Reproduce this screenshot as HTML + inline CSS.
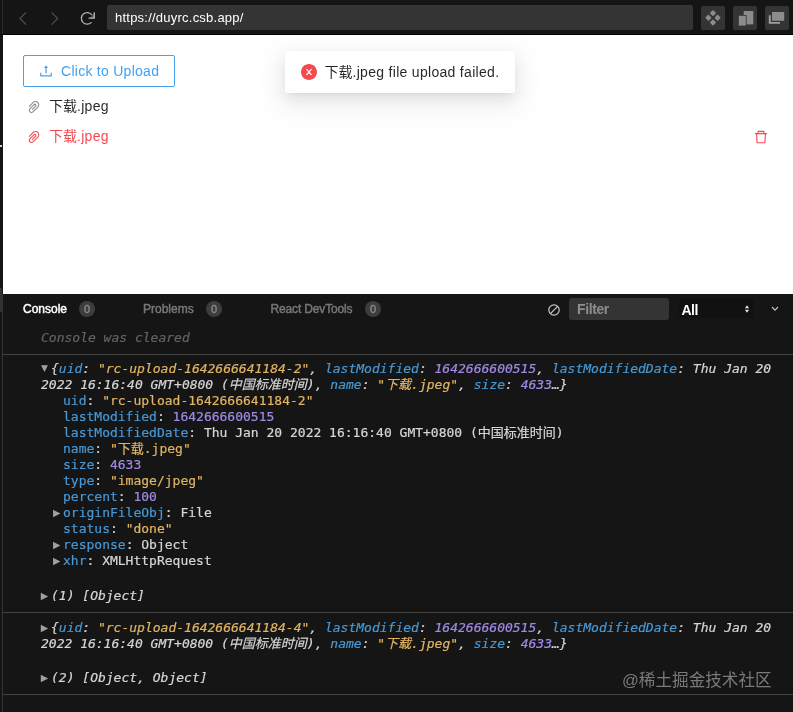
<!DOCTYPE html>
<html lang="en">
<head>
<meta charset="utf-8">
<title>Upload</title>
<style>
*{box-sizing:border-box;margin:0;padding:0}
html,body{width:793px;height:712px;overflow:hidden;background:#151515;}
body{position:relative;font-family:"Liberation Sans","Noto Sans CJK SC",sans-serif;}
.abs{position:absolute}
#topbar{left:0;top:0;width:793px;height:35px;background:#151515;}
#url{left:107px;top:5px;width:586px;height:25px;letter-spacing:.23px;background:#343434;border-radius:2px;color:#fff;font-size:13px;line-height:26px;padding-left:8px;}
.tb{top:6px;width:24px;height:24px;background:#343434;border-radius:2px}
#view{left:3px;top:35px;width:790px;height:259px;background:#fff;}
#btn{left:23px;top:55px;width:152px;height:32px;border:1px solid #42a1f0;border-radius:2px;color:#42a1f0;font-size:14px;line-height:30px;background:#fff}
#btn span{position:absolute;left:37px;top:0;white-space:nowrap;letter-spacing:.27px}
.item{left:49px;font-size:14px;line-height:22px;white-space:nowrap}
.ls{letter-spacing:.3px}
#toast{left:285px;top:51px;width:230px;height:42px;background:#fff;border-radius:2px;box-shadow:0 3px 6px -4px rgba(0,0,0,.12),0 6px 16px 0 rgba(0,0,0,.08),0 9px 28px 8px rgba(0,0,0,.05);font-size:14px;color:rgba(0,0,0,.85);line-height:42px;white-space:nowrap}
#toast span{position:absolute;left:39.5px;top:0}
#toast span span{position:static;letter-spacing:.3px}
#dev{left:3px;top:294px;width:790px;height:418px;background:#151515}
.tab{top:302px;font-size:12px;font-weight:normal;-webkit-text-stroke:.45px currentColor;line-height:14px;white-space:nowrap;font-family:"Liberation Sans",sans-serif;transform-origin:0 50%;}
.badge{top:301px;width:16px;height:16px;border-radius:8px;background:#3d3d3d;color:#8e8e8e;font-size:11px;-webkit-text-stroke:.3px currentColor;text-align:center;line-height:16px}
.hr{left:3px;width:790px;height:1px;background:#434343}
.mono{font-family:"DejaVu Sans Mono","Liberation Mono","Noto Sans CJK SC",monospace;font-size:13px;line-height:16px;white-space:pre;color:#d6d6d6;-webkit-text-stroke:.2px currentColor;}
.i{font-style:italic}
.k{color:#4799d6}.s{color:#e2b563}.n{color:#a08ae4}.g{color:#cfcfcf}
.tri{color:#a0a0a0;font-size:9.6px;font-family:"DejaVu Sans",sans-serif;line-height:16px}
</style>
</head>
<body>
<div id="root" style="position:absolute;left:0;top:0;width:793px;height:712px;will-change:transform">
<div id="topbar" class="abs"></div>
<svg class="abs" style="left:0;top:0" width="110" height="35" viewBox="0 0 110 35" fill="none" stroke-linecap="round" stroke-linejoin="round">
<path d="M25.8 12.6 L20 18.5 L25.8 24.4" stroke="#505050" stroke-width="1.15"/>
<path d="M51.8 12.6 L57.6 18.5 L51.8 24.4" stroke="#505050" stroke-width="1.15"/>
<path d="M91.6 14.6 A5.8 5.8 0 1 0 91.2 22.6" stroke="#b4b4b4" stroke-width="1.25"/>
<path d="M94.3 12.3 V18.1 H88.6" stroke="#b4b4b4" stroke-width="1.3" stroke-linecap="butt" stroke-linejoin="miter"/><path d="M94.3 13 V18.1 H90 Z" fill="#b4b4b4" opacity=".45"/>
</svg>
<div id="url" class="abs">https://duyrc.csb.app/</div>
<div class="abs tb" style="left:701px"></div>
<div class="abs tb" style="left:733px"></div>
<div class="abs tb" style="left:765px"></div>
<svg class="abs" style="left:697px;top:0" width="96" height="35" viewBox="697 0 96 35">
<g fill="#8c8c8c">
<rect x="710.7" y="10.8" width="4.6" height="4.6" rx="0.8" transform="rotate(45 713 13.1)"/>
<rect x="710.7" y="20.2" width="4.6" height="4.6" rx="0.8" transform="rotate(45 713 22.5)"/>
<rect x="706.1" y="15.5" width="4.6" height="4.6" rx="0.8" transform="rotate(45 708.4 17.8)"/>
<rect x="715.3" y="15.5" width="4.6" height="4.6" rx="0.8" transform="rotate(45 717.6 17.8)"/>
<rect x="743.7" y="11" width="9.6" height="13.4"/>
<rect x="738.2" y="15" width="8.4" height="10.8" fill="#343434"/>
<rect x="738.8" y="15.8" width="7" height="9.8"/>
<rect x="772" y="12" width="12.2" height="8.8"/>
<path d="M768.8 15.2 H770.8 V21.9 H780 V23.8 H768.8 Z" fill="#a0a0a0"/>
</g>
</svg>
<div class="abs" style="left:0;top:34px;width:793px;height:1px;background:#000"></div>
<div class="abs" style="left:2px;top:0;width:1px;height:34px;background:#2a2a2a"></div>
<div id="view" class="abs"></div>
<div id="btn" class="abs">
<svg class="abs" style="left:15px;top:8px" width="14" height="14" viewBox="64 64 896 896" fill="#42a1f0"><path d="M400 317.7h73.900V656c0 4.400 3.600 8 8 8h60c4.400 0 8-3.600 8-8V317.700H624c6.700 0 10.400-7.700 6.300-12.900L518.300 163a8 8 0 00-12.600 0l-112 141.700c-4.100 5.300-.4 13 6.300 13zM878 626h-60c-4.400 0-8 3.600-8 8v154H214V634c0-4.400-3.600-8-8-8h-60c-4.400 0-8 3.600-8 8v198c0 17.700 14.300 32 32 32h684c17.700 0 32-14.300 32-32V634c0-4.400-3.600-8-8-8z"/></svg>
<span>Click to Upload</span></div>
<div class="abs item" style="top:95px;color:rgba(0,0,0,.85)">下载<span class="ls">.jpeg</span></div>
<div class="abs item" style="top:125px;color:#f34a52">下载<span class="ls">.jpeg</span></div>
<svg class="abs" style="left:27px;top:99.7px" width="14" height="14" viewBox="64 64 896 896" fill="rgba(0,0,0,.45)"><path d="M779.3 196.6c-94.2-94.2-247.6-94.2-341.7 0l-261 260.800c-1.700 1.700-2.600 4-2.600 6.400s.9 4.700 2.600 6.400l36.900 36.900a9 9 0 0012.700 0l261-260.800c32.400-32.400 75.500-50.200 121.300-50.200s88.900 17.800 121.200 50.200c32.400 32.400 50.200 75.500 50.200 121.200 0 45.800-17.800 88.800-50.200 121.200l-266 265.900-43.100 43.100c-40.300 40.300-105.800 40.300-146.100 0-19.500-19.500-30.200-45.400-30.200-73s10.700-53.500 30.200-73l263.900-263.800c6.700-6.600 15.500-10.300 24.900-10.300h.1c9.400 0 18.100 3.700 24.700 10.300 6.700 6.700 10.300 15.500 10.300 24.900 0 9.300-3.700 18.100-10.300 24.700L372.400 653c-1.700 1.700-2.600 4-2.600 6.400s.9 4.700 2.600 6.400l36.900 36.900a9 9 0 0012.700 0l215.600-215.600c19.900-19.900 30.800-46.300 30.800-74.400s-11-54.600-30.800-74.400c-41.100-41.100-107.900-41-149 0L463 364 224.800 602.100A172.220 172.220 0 00174 724.800c0 46.300 18.100 89.800 50.800 122.500 33.900 33.800 78.300 50.700 122.700 50.700 44.400 0 88.800-16.900 122.600-50.700l309.200-309C824.800 492.700 850 432 850 367.500c.1-64.600-25.100-125.300-70.700-170.900z"/></svg>
<svg class="abs" style="left:27px;top:129.7px" width="14" height="14" viewBox="64 64 896 896" fill="#f34a52"><path d="M779.3 196.6c-94.2-94.2-247.6-94.2-341.7 0l-261 260.800c-1.700 1.700-2.600 4-2.600 6.400s.9 4.700 2.600 6.400l36.900 36.900a9 9 0 0012.700 0l261-260.800c32.400-32.400 75.500-50.200 121.300-50.200s88.900 17.800 121.200 50.200c32.400 32.400 50.200 75.500 50.200 121.200 0 45.800-17.800 88.800-50.200 121.200l-266 265.900-43.100 43.100c-40.300 40.300-105.800 40.300-146.100 0-19.500-19.500-30.200-45.400-30.200-73s10.700-53.500 30.200-73l263.900-263.800c6.700-6.600 15.500-10.300 24.900-10.300h.1c9.400 0 18.100 3.700 24.700 10.300 6.700 6.700 10.300 15.500 10.300 24.900 0 9.300-3.700 18.100-10.300 24.700L372.400 653c-1.700 1.700-2.600 4-2.600 6.400s.9 4.700 2.600 6.400l36.900 36.900a9 9 0 0012.700 0l215.600-215.600c19.900-19.900 30.800-46.300 30.800-74.400s-11-54.600-30.800-74.400c-41.100-41.100-107.900-41-149 0L463 364 224.800 602.100A172.220 172.220 0 00174 724.800c0 46.300 18.100 89.800 50.800 122.500 33.900 33.800 78.300 50.700 122.700 50.700 44.400 0 88.800-16.900 122.600-50.700l309.200-309C824.800 492.700 850 432 850 367.500c.1-64.600-25.100-125.300-70.700-170.900z"/></svg>
<svg class="abs" style="left:754px;top:130px" width="14" height="14" viewBox="64 64 896 896" fill="#f34a52"><path d="M360 184h-8c4.400 0 8-3.600 8-8v8h304v-8c0 4.400 3.600 8 8 8h-8v72h72v-80c0-35.300-28.700-64-64-64H352c-35.300 0-64 28.700-64 64v80h72v-72zm504 72H160c-17.700 0-32 14.300-32 32v32c0 4.400 3.600 8 8 8h60.400l24.700 523c1.600 34.100 29.800 61 63.900 61h454c34.200 0 62.300-26.800 63.900-61l24.700-523H888c4.400 0 8-3.600 8-8v-32c0-17.700-14.300-32-32-32zM731.300 840H292.700l-24.200-512h487l-24.200 512z"/></svg>
<div id="toast" class="abs">
<svg class="abs" style="left:16px;top:13px" width="16" height="16" viewBox="64 64 896 896" fill="#f34a52"><path d="M512 64C264.600 64 64 264.600 64 512s200.600 448 448 448 448-200.600 448-448S759.400 64 512 64zm165.400 618.200l-66-.3L512 563.400l-99.300 118.400-66.100.3c-4.400 0-8-3.500-8-8 0-1.900.7-3.700 1.900-5.200l130.100-155L340.500 359a8.320 8.320 0 01-1.900-5.200c0-4.400 3.600-8 8-8l66.100.3L512 464.600l99.300-118.400 66-.3c4.400 0 8 3.500 8 8 0 1.900-.7 3.700-1.900 5.200L553.500 514l130 155c1.200 1.500 1.900 3.300 1.900 5.200 0 4.400-3.600 8-8 8z"/></svg>
<span>下载<span>.jpeg file upload failed.</span></span></div>

<div id="dev" class="abs"></div>
<div class="abs" style="left:2px;top:294px;width:1px;height:418px;background:#333"></div>
<div class="abs" style="left:0;top:288px;width:2px;height:23.5px;background:#323232"></div>
<div class="abs" style="left:0;top:145px;width:2px;height:2px;background:#cfcfcf"></div>
<div class="abs tab" style="left:23px;color:#fff">Console</div>
<div class="abs badge" style="left:79px">0</div>
<div class="abs tab" style="left:143px;color:#777">Problems</div>
<div class="abs badge" style="left:206px">0</div>
<div class="abs tab" style="left:270.5px;color:#777;letter-spacing:-.15px">React DevTools</div>
<div class="abs badge" style="left:365px">0</div>
<svg class="abs" style="left:547.3px;top:302.5px" width="14" height="14" viewBox="0 0 14 14" fill="none" stroke="#c8c8c8" stroke-width="1.2"><circle cx="7" cy="7" r="5.2"/><path d="M3.4 10.6 L10.6 3.4"/></svg>
<div class="abs" style="left:569px;top:298px;width:100px;height:22px;background:#343434;border-radius:3px;color:#8e8e8e;font-size:14px;letter-spacing:-.4px;font-weight:bold;line-height:23px;padding-left:8px">Filter</div>
<div class="abs" style="left:679px;top:299px;width:75px;height:19px;background:#111;border-radius:3px"></div>
<div class="abs" style="left:681.5px;top:299px;font-size:14px;font-weight:bold;color:#fff;line-height:22px;letter-spacing:-.5px">All</div>
<svg class="abs" style="left:742.6px;top:304px" width="8" height="12" viewBox="0 0 8 12" fill="#e0e0e0"><path d="M4 1.2 L6.1 4.2 H1.9 Z M4 8.8 L6.1 5.8 H1.9 Z"/></svg>
<svg class="abs" style="left:770.3px;top:305px" width="10" height="8" viewBox="0 0 10 8" fill="none" stroke="#c4c4c4" stroke-width="1.2"><path d="M2 2 L5 5.2 L8 2"/></svg>

<div class="abs mono i" style="left:41px;top:330px;color:#636363">Console was cleared</div>
<div class="abs hr" style="top:354px"></div>

<div class="abs tri" style="left:41px;top:360.4px;font-size:9px">▼</div>
<div class="abs mono i" style="left:51px;top:361px"><span class="g">{</span><span class="k">uid</span>: <span class="s">"rc-upload-1642666641184-2"</span>, <span class="k">lastModified</span>: <span class="n">1642666600515</span>, <span class="k">lastModifiedDate</span>: Thu Jan 20</div>
<div class="abs mono i" style="left:41px;top:377px">2022 16:16:40 GMT+0800 (中国标准时间), <span class="k">name</span>: <span class="s">"下载.jpeg"</span>, <span class="k">size</span>: <span class="n">4633</span>…}</div>
<div class="abs mono" style="left:63px;top:393px"><span class="k">uid</span>: <span class="s">"rc-upload-1642666641184-2"</span>
<span class="k">lastModified</span>: <span class="n">1642666600515</span>
<span class="k">lastModifiedDate</span>: Thu Jan 20 2022 16:16:40 GMT+0800 (中国标准时间)
<span class="k">name</span>: <span class="s">"下载.jpeg"</span>
<span class="k">size</span>: <span class="n">4633</span>
<span class="k">type</span>: <span class="s">"image/jpeg"</span>
<span class="k">percent</span>: <span class="n">100</span>
<span class="k">originFileObj</span>: File
<span class="k">status</span>: <span class="s">"done"</span>
<span class="k">response</span>: Object
<span class="k">xhr</span>: XMLHttpRequest</div>
<div class="abs tri" style="left:53px;top:505px">▶</div>
<div class="abs tri" style="left:53px;top:537px">▶</div>
<div class="abs tri" style="left:53px;top:553px">▶</div>

<div class="abs tri" style="left:40.8px;top:588px">▶</div>
<div class="abs mono i" style="left:51px;top:588px">(1) [Object]</div>
<div class="abs hr" style="top:612px"></div>

<div class="abs tri" style="left:40.8px;top:620px">▶</div>
<div class="abs mono i" style="left:51px;top:620px"><span class="g">{</span><span class="k">uid</span>: <span class="s">"rc-upload-1642666641184-4"</span>, <span class="k">lastModified</span>: <span class="n">1642666600515</span>, <span class="k">lastModifiedDate</span>: Thu Jan 20</div>
<div class="abs mono i" style="left:41px;top:636px">2022 16:16:40 GMT+0800 (中国标准时间), <span class="k">name</span>: <span class="s">"下载.jpeg"</span>, <span class="k">size</span>: <span class="n">4633</span>…}</div>
<div class="abs tri" style="left:40.8px;top:670px">▶</div>
<div class="abs mono i" style="left:51px;top:670px">(2) [Object, Object]</div>
<div class="abs hr" style="top:694px"></div>
<div class="abs" style="left:622px;top:669.6px;font-size:16.6px;line-height:22px;color:#7a7a7a;white-space:nowrap;font-family:'Liberation Sans','Noto Sans CJK SC',sans-serif">@稀土掘金技术社区</div>
</div>
</body>
</html>
